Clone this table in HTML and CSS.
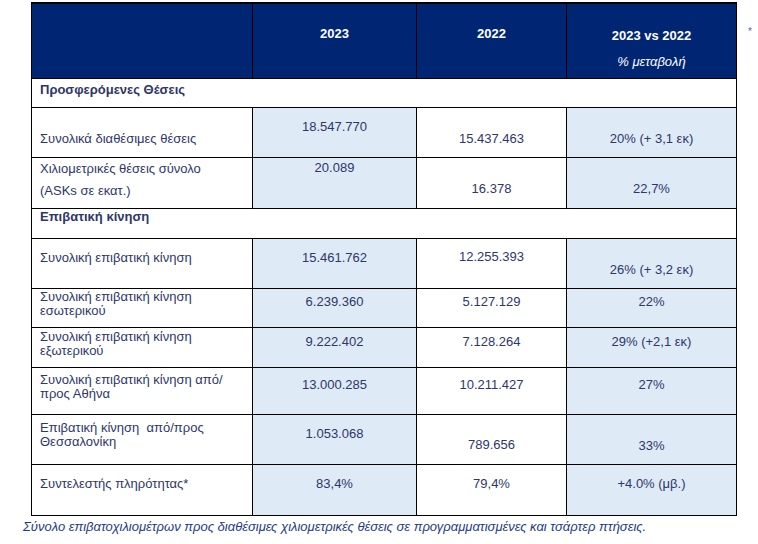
FILE: index.html
```html
<!DOCTYPE html>
<html lang="el">
<head>
<meta charset="utf-8">
<title>Στατιστικά</title>
<link rel="stylesheet" href="styles.css">
</head>
<body>
<div class="page">
  <div class="top">
    <table class="stats">
      <colgroup>
        <col class="c1"><col class="c2"><col class="c3"><col class="c4">
      </colgroup>
      <tr class="h-head">
        <th></th>
        <th><div class="p30">2023</div></th>
        <th><div class="p30">2022</div></th>
        <th><div class="p30 two">2023 vs 2022<br><span class="it">% μεταβολή</span></div></th>
      </tr>
      <tr class="h-sec1">
        <td colspan="4" class="sec"><div class="p4">Προσφερόμενες Θέσεις</div></td>
      </tr>
      <tr class="h50">
        <td class="lab"><div class="p24">Συνολικά διαθέσιμες θέσεις</div></td>
        <td class="num blue"><div class="p12">18.547.770</div></td>
        <td class="num"><div class="p24">15.437.463</div></td>
        <td class="num blue"><div class="p24">20% (+ 3,1 εκ)</div></td>
      </tr>
      <tr class="h51">
        <td class="lab"><div class="p2 wide">Χιλιομετρικές θέσεις σύνολο<br>(ASKs σε εκατ.)</div></td>
        <td class="num blue"><div class="p3">20.089</div></td>
        <td class="num"><div class="p24">16.378</div></td>
        <td class="num blue"><div class="p24">22,7%</div></td>
      </tr>
      <tr class="h-sec2">
        <td colspan="4" class="sec"><div class="p1">Επιβατική κίνηση</div></td>
      </tr>
      <tr class="h50">
        <td class="lab"><div class="p12">Συνολική επιβατική κίνηση</div></td>
        <td class="num blue"><div class="p12">15.461.762</div></td>
        <td class="num"><div class="p11">12.255.393</div></td>
        <td class="num blue"><div class="p24">26% (+ 3,2 εκ)</div></td>
      </tr>
      <tr class="h39">
        <td class="lab"><div class="p1">Συνολική επιβατική κίνηση<br>εσωτερικού</div></td>
        <td class="num blue"><div class="p6">6.239.360</div></td>
        <td class="num"><div class="p6">5.127.129</div></td>
        <td class="num blue"><div class="p6">22%</div></td>
      </tr>
      <tr class="h40">
        <td class="lab"><div class="p2">Συνολική επιβατική κίνηση<br>εξωτερικού</div></td>
        <td class="num blue"><div class="p7">9.222.402</div></td>
        <td class="num"><div class="p7">7.128.264</div></td>
        <td class="num blue"><div class="p7">29% (+2,1 εκ)</div></td>
      </tr>
      <tr class="h47">
        <td class="lab"><div class="p5">Συνολική επιβατική κίνηση από/<br>προς Αθήνα</div></td>
        <td class="num blue"><div class="p10">13.000.285</div></td>
        <td class="num"><div class="p10">10.211.427</div></td>
        <td class="num blue"><div class="p10">27%</div></td>
      </tr>
      <tr class="h50">
        <td class="lab"><div class="p6">Επιβατική κίνηση&nbsp; από/προς<br>Θεσσαλονίκη</div></td>
        <td class="num blue"><div class="p12">1.053.068</div></td>
        <td class="num"><div class="p23">789.656</div></td>
        <td class="num blue"><div class="p24">33%</div></td>
      </tr>
      <tr class="h51">
        <td class="lab"><div class="p12">Συντελεστής πληρότητας*</div></td>
        <td class="num blue"><div class="p12">83,4%</div></td>
        <td class="num"><div class="p12">79,4%</div></td>
        <td class="num blue"><div class="p12">+4.0% (μβ.)</div></td>
      </tr>
    </table>
    <span class="star">*</span>
  </div>
  <p class="note">Σύνολο επιβατοχιλιομέτρων προς διαθέσιμες χιλιομετρικές θέσεις σε προγραμματισμένες και τσάρτερ πτήσεις.</p>
</div>
</body>
</html>
```

FILE: styles.css
```css
html, body {
  margin: 0;
  padding: 0;
  background: #ffffff;
}

body {
  font-family: "Liberation Sans", Arial, sans-serif;
  font-size: 13px;
  color: #2f3668;
}

.page {
  padding: 2px 0 0 31px;
}

.top {
  display: flex;
  align-items: flex-start;
}

.stats {
  border-collapse: separate;
  border-spacing: 0;
  border-top: 2px solid #000;
  border-left: 1px solid #000;
  table-layout: fixed;
  width: 705px;
}

.c1 { width: 221px; }
.c2 { width: 164px; }
.c3 { width: 150px; }
.c4 { width: 170px; }

.stats th,
.stats td {
  border-right: 1px solid #000;
  border-bottom: 1px solid #000;
  padding: 0;
  vertical-align: top;
  line-height: 14px;
  box-sizing: border-box;
}

.stats th {
  background: #002673;
  color: #ffffff;
  font-weight: bold;
  text-align: center;
}

.stats .it {
  font-style: italic;
  font-weight: normal;
}

.two { line-height: 26px; }
.p30.two { padding-top: 19px; }

.h-head { height: 75px; }
.h-sec1 { height: 29px; }
.h-sec2 { height: 30px; }
.h50 { height: 50px; }
.h51 { height: 51px; }
.h39 { height: 39px; }
.h40 { height: 40px; }
.h47 { height: 47px; }

.sec {
  font-weight: bold;
  padding-left: 8px !important;
  text-align: left;
}

.lab {
  padding-left: 8px !important;
  text-align: left;
}

.wide { line-height: 22px; }
.p2.wide { padding-top: 0; }

.num { text-align: center; }
.blue { background: #deeaf6; }

.p1 { padding-top: 1px; }
.p2 { padding-top: 2px; }
.p3 { padding-top: 3px; }
.p4 { padding-top: 4px; }
.p5 { padding-top: 5px; }
.p6 { padding-top: 6px; }
.p7 { padding-top: 7px; }
.p10 { padding-top: 10px; }
.p11 { padding-top: 11px; }
.p12 { padding-top: 12px; }
.p23 { padding-top: 23px; }
.p24 { padding-top: 24px; }
.p30 { padding-top: 23px; }

.star {
  margin: 24px 0 0 11px;
  font-size: 10px;
  color: #5a6a9a;
}

.note {
  margin: 3px 0 0 -8px;
  font-size: 13px;
  font-style: italic;
  color: #243a80;
}
```
